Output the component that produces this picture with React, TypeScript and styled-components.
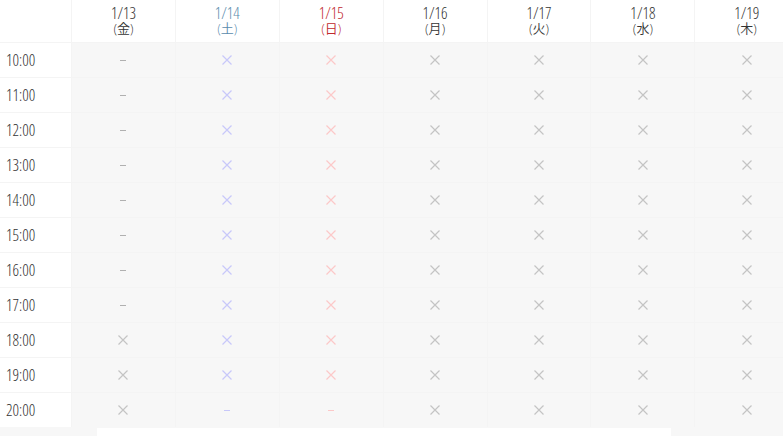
import React from "react";
import styled, { createGlobalStyle } from "styled-components";

const Global = createGlobalStyle`
  html, body { margin: 0; padding: 0; background: #f7f7f7; overflow: hidden; }
  body { font-family: "Open Sans", "Noto Sans CJK JP", sans-serif; font-stretch: 75%; color: #333; }
`;

type Kind = "normal" | "sat" | "sun";
type Mark = "x" | "-";

const headColor: Record<Kind, string> = { normal: "#333", sat: "#5a8cad", sun: "#c0282d" };
const markColor: Record<Kind, string> = { normal: "#c4c4c4", sat: "#c8c8fa", sun: "#fcc8c8" };
const dashColor: Record<Kind, string> = { normal: "#b0b0b0", sat: "#c8c8fa", sun: "#fcc8c8" };

const days: { date: string; wd: string; kind: Kind }[] = [
  { date: "1/13", wd: "金", kind: "normal" },
  { date: "1/14", wd: "土", kind: "sat" },
  { date: "1/15", wd: "日", kind: "sun" },
  { date: "1/16", wd: "月", kind: "normal" },
  { date: "1/17", wd: "火", kind: "normal" },
  { date: "1/18", wd: "水", kind: "normal" },
  { date: "1/19", wd: "木", kind: "normal" },
];

const times = ["10:00", "11:00", "12:00", "13:00", "14:00", "15:00", "16:00", "17:00", "18:00", "19:00", "20:00"];

const markFor = (dayIdx: number, rowIdx: number): Mark => {
  if (dayIdx === 0) return rowIdx < 8 ? "-" : "x";
  if (dayIdx === 1 || dayIdx === 2) return rowIdx === 10 ? "-" : "x";
  return "x";
};

const Table = styled.div`
  display: grid;
  grid-template-columns: 71px repeat(7, 102.9px);
  grid-template-rows: 42px repeat(11, 34px);
  gap: 1px;
  width: 800px;
  background: #f4f4f4;
`;

const Corner = styled.div`
  background: #fff;
`;

const HeadCell = styled.div<{ $kind: Kind }>`
  background: #fff;
  display: flex;
  flex-direction: column;
  align-items: center;
  justify-content: center;
  color: ${(p) => headColor[p.$kind]};
  padding-bottom: 1px;
`;

const DateText = styled.span`
  font-size: 16px;
  line-height: 16px;
  font-weight: 350;
`;

const WeekText = styled.span`
  font-size: 13px;
  line-height: 15px;
  font-weight: 350;
`;

const TimeCell = styled.div`
  background: #fff;
  display: flex;
  align-items: center;
  padding-left: 6px;
  padding-bottom: 1px;
  font-size: 16px;
  font-weight: 350;
  color: #333;
`;

const BodyCell = styled.div`
  background: #f7f7f7;
  display: flex;
  align-items: center;
  justify-content: center;
`;

const Dash = styled.span<{ $kind: Kind }>`
  width: 6px;
  height: 1px;
  background: ${(p) => dashColor[p.$kind]};
`;

const Footer = styled.div`
  margin: 1px 0 0 97px;
  width: 574px;
  height: 20px;
  background: #fff;
`;

const Cross = ({ color }: { color: string }) => (
  <svg width="10" height="10" viewBox="0 0 10 10">
    <path d="M0.5 0.5 L9.5 9.5 M9.5 0.5 L0.5 9.5" stroke={color} strokeWidth="1.2" fill="none" />
  </svg>
);

export default function App() {
  return (
    <>
      <Global />
      <Table>
        <Corner />
        {days.map((d) => (
          <HeadCell key={d.date} $kind={d.kind}>
            <DateText>{d.date}</DateText>
            <WeekText>({d.wd})</WeekText>
          </HeadCell>
        ))}
        {times.map((t, r) => (
          <React.Fragment key={t}>
            <TimeCell>{t}</TimeCell>
            {days.map((d, i) => (
              <BodyCell key={d.date}>
                {markFor(i, r) === "x" ? <Cross color={markColor[d.kind]} /> : <Dash $kind={d.kind} />}
              </BodyCell>
            ))}
          </React.Fragment>
        ))}
      </Table>
      <Footer />
    </>
  );
}
